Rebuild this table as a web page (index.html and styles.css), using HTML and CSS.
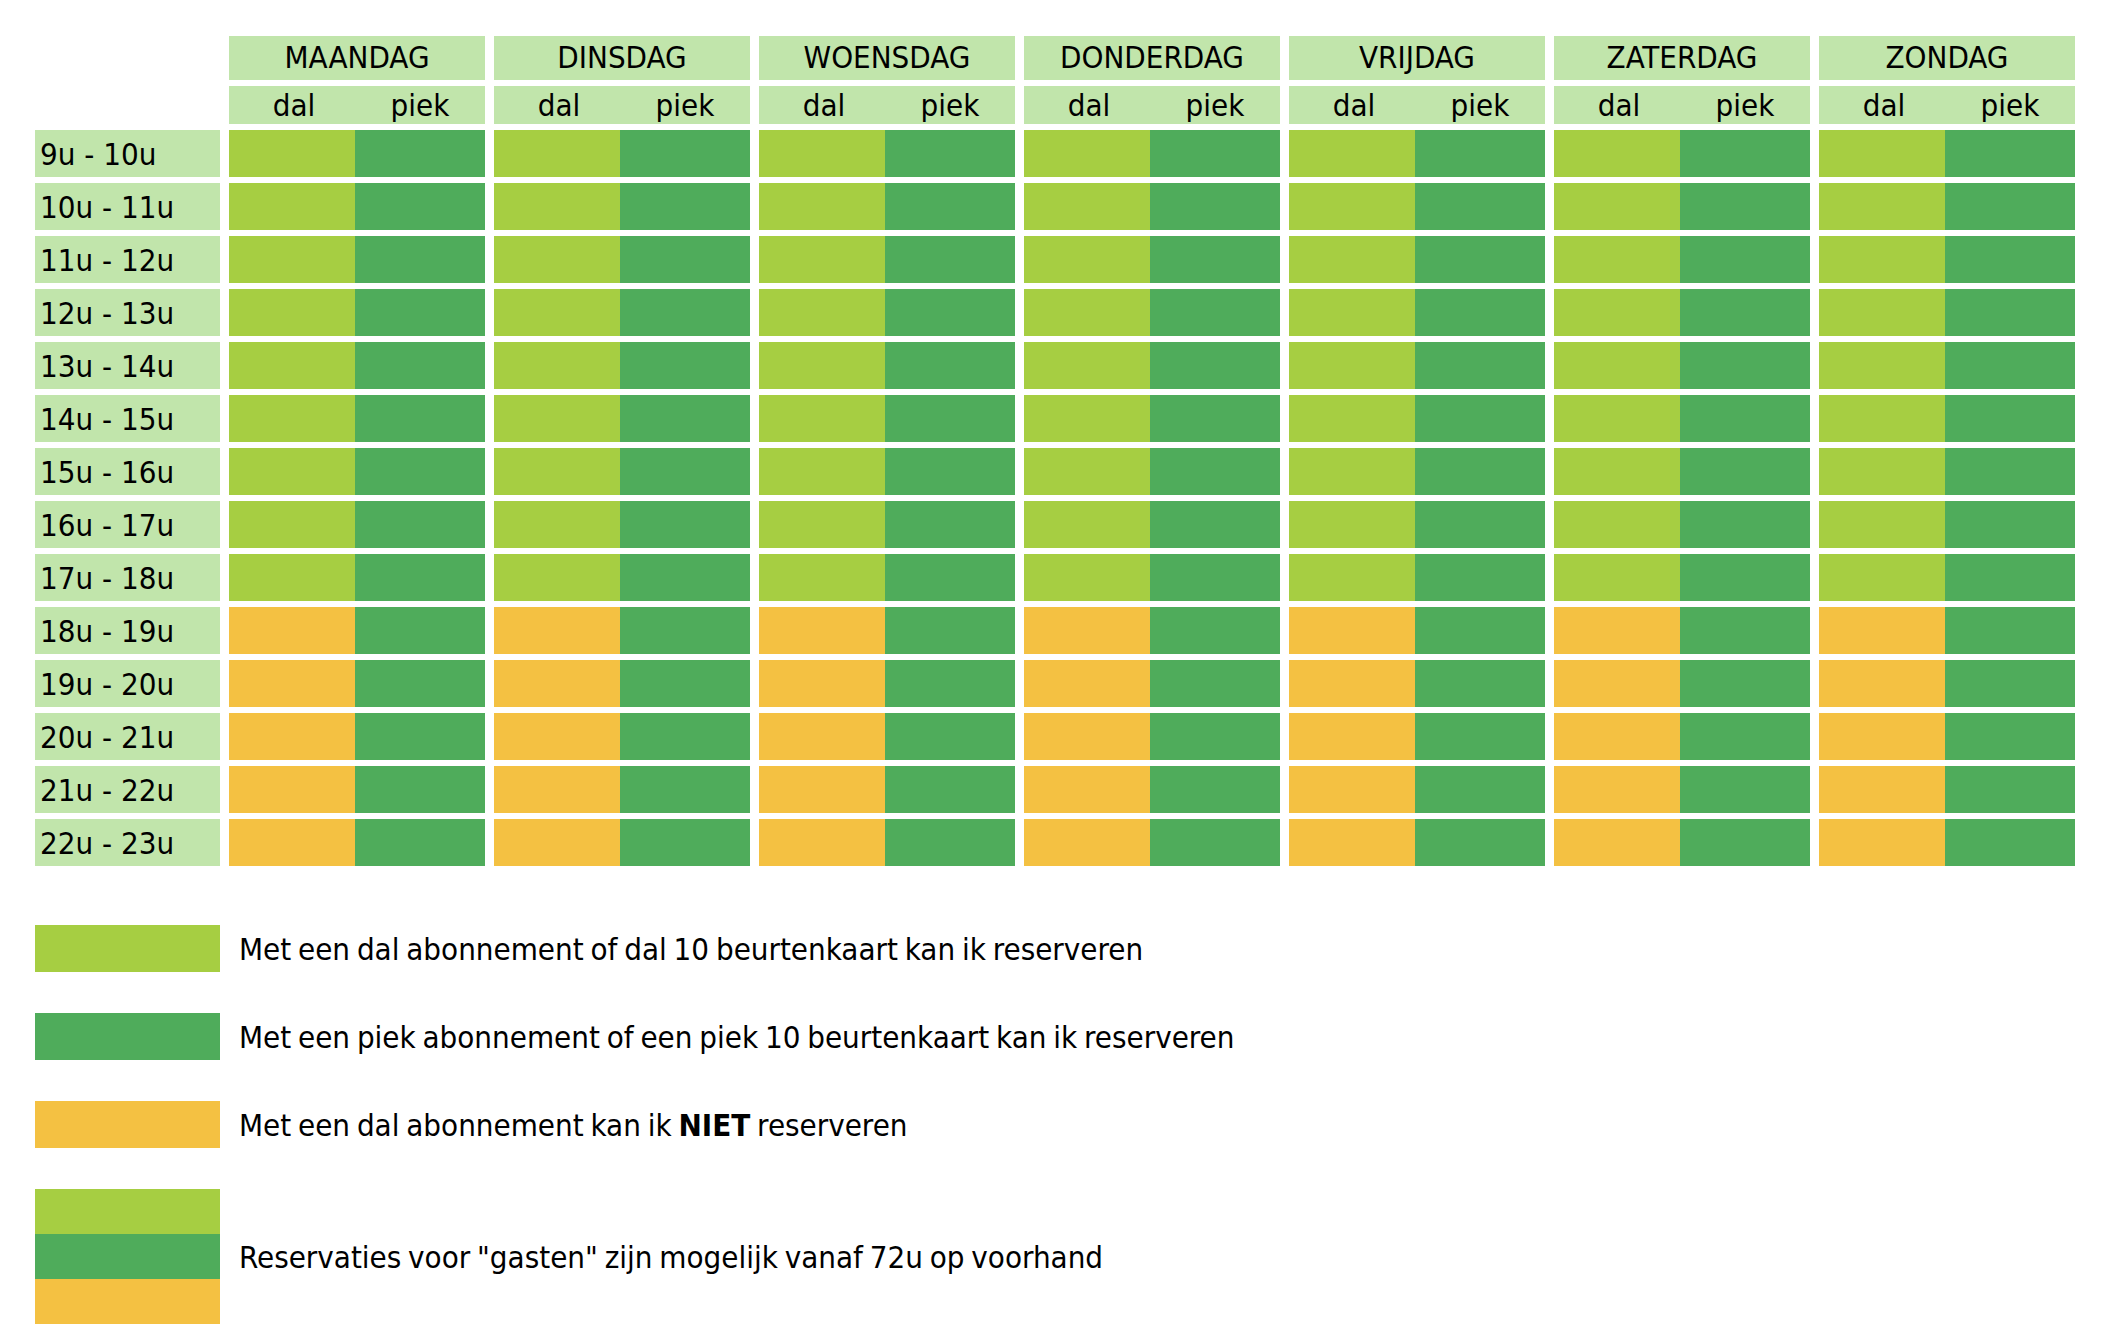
FILE: index.html
```html
<!DOCTYPE html>
<html lang="nl">
<head>
<meta charset="utf-8">
<title>Reservatieschema</title>
<link rel="stylesheet" href="styles.css">
</head>
<body>
<div class="page">
  <div class="schedule">
    <div class="corner"></div>
    <div class="day">MAANDAG</div>
    <div class="day">DINSDAG</div>
    <div class="day">WOENSDAG</div>
    <div class="day">DONDERDAG</div>
    <div class="day">VRIJDAG</div>
    <div class="day">ZATERDAG</div>
    <div class="day">ZONDAG</div>

    <div class="sub"><span class="dal">dal</span><span class="piek">piek</span></div>
    <div class="sub"><span class="dal">dal</span><span class="piek">piek</span></div>
    <div class="sub"><span class="dal">dal</span><span class="piek">piek</span></div>
    <div class="sub"><span class="dal">dal</span><span class="piek">piek</span></div>
    <div class="sub"><span class="dal">dal</span><span class="piek">piek</span></div>
    <div class="sub"><span class="dal">dal</span><span class="piek">piek</span></div>
    <div class="sub"><span class="dal">dal</span><span class="piek">piek</span></div>
  </div>

  <div class="schedule body">
    <div class="time">9u - 10u</div>
    <div class="slot day-light"><div class="dal"></div><div class="piek"></div></div>
    <div class="slot day-light"><div class="dal"></div><div class="piek"></div></div>
    <div class="slot day-light"><div class="dal"></div><div class="piek"></div></div>
    <div class="slot day-light"><div class="dal"></div><div class="piek"></div></div>
    <div class="slot day-light"><div class="dal"></div><div class="piek"></div></div>
    <div class="slot day-light"><div class="dal"></div><div class="piek"></div></div>
    <div class="slot day-light"><div class="dal"></div><div class="piek"></div></div>

    <div class="time">10u - 11u</div>
    <div class="slot day-light"><div class="dal"></div><div class="piek"></div></div>
    <div class="slot day-light"><div class="dal"></div><div class="piek"></div></div>
    <div class="slot day-light"><div class="dal"></div><div class="piek"></div></div>
    <div class="slot day-light"><div class="dal"></div><div class="piek"></div></div>
    <div class="slot day-light"><div class="dal"></div><div class="piek"></div></div>
    <div class="slot day-light"><div class="dal"></div><div class="piek"></div></div>
    <div class="slot day-light"><div class="dal"></div><div class="piek"></div></div>

    <div class="time">11u - 12u</div>
    <div class="slot day-light"><div class="dal"></div><div class="piek"></div></div>
    <div class="slot day-light"><div class="dal"></div><div class="piek"></div></div>
    <div class="slot day-light"><div class="dal"></div><div class="piek"></div></div>
    <div class="slot day-light"><div class="dal"></div><div class="piek"></div></div>
    <div class="slot day-light"><div class="dal"></div><div class="piek"></div></div>
    <div class="slot day-light"><div class="dal"></div><div class="piek"></div></div>
    <div class="slot day-light"><div class="dal"></div><div class="piek"></div></div>

    <div class="time">12u - 13u</div>
    <div class="slot day-light"><div class="dal"></div><div class="piek"></div></div>
    <div class="slot day-light"><div class="dal"></div><div class="piek"></div></div>
    <div class="slot day-light"><div class="dal"></div><div class="piek"></div></div>
    <div class="slot day-light"><div class="dal"></div><div class="piek"></div></div>
    <div class="slot day-light"><div class="dal"></div><div class="piek"></div></div>
    <div class="slot day-light"><div class="dal"></div><div class="piek"></div></div>
    <div class="slot day-light"><div class="dal"></div><div class="piek"></div></div>

    <div class="time">13u - 14u</div>
    <div class="slot day-light"><div class="dal"></div><div class="piek"></div></div>
    <div class="slot day-light"><div class="dal"></div><div class="piek"></div></div>
    <div class="slot day-light"><div class="dal"></div><div class="piek"></div></div>
    <div class="slot day-light"><div class="dal"></div><div class="piek"></div></div>
    <div class="slot day-light"><div class="dal"></div><div class="piek"></div></div>
    <div class="slot day-light"><div class="dal"></div><div class="piek"></div></div>
    <div class="slot day-light"><div class="dal"></div><div class="piek"></div></div>

    <div class="time">14u - 15u</div>
    <div class="slot day-light"><div class="dal"></div><div class="piek"></div></div>
    <div class="slot day-light"><div class="dal"></div><div class="piek"></div></div>
    <div class="slot day-light"><div class="dal"></div><div class="piek"></div></div>
    <div class="slot day-light"><div class="dal"></div><div class="piek"></div></div>
    <div class="slot day-light"><div class="dal"></div><div class="piek"></div></div>
    <div class="slot day-light"><div class="dal"></div><div class="piek"></div></div>
    <div class="slot day-light"><div class="dal"></div><div class="piek"></div></div>

    <div class="time">15u - 16u</div>
    <div class="slot day-light"><div class="dal"></div><div class="piek"></div></div>
    <div class="slot day-light"><div class="dal"></div><div class="piek"></div></div>
    <div class="slot day-light"><div class="dal"></div><div class="piek"></div></div>
    <div class="slot day-light"><div class="dal"></div><div class="piek"></div></div>
    <div class="slot day-light"><div class="dal"></div><div class="piek"></div></div>
    <div class="slot day-light"><div class="dal"></div><div class="piek"></div></div>
    <div class="slot day-light"><div class="dal"></div><div class="piek"></div></div>

    <div class="time">16u - 17u</div>
    <div class="slot day-light"><div class="dal"></div><div class="piek"></div></div>
    <div class="slot day-light"><div class="dal"></div><div class="piek"></div></div>
    <div class="slot day-light"><div class="dal"></div><div class="piek"></div></div>
    <div class="slot day-light"><div class="dal"></div><div class="piek"></div></div>
    <div class="slot day-light"><div class="dal"></div><div class="piek"></div></div>
    <div class="slot day-light"><div class="dal"></div><div class="piek"></div></div>
    <div class="slot day-light"><div class="dal"></div><div class="piek"></div></div>

    <div class="time">17u - 18u</div>
    <div class="slot day-light"><div class="dal"></div><div class="piek"></div></div>
    <div class="slot day-light"><div class="dal"></div><div class="piek"></div></div>
    <div class="slot day-light"><div class="dal"></div><div class="piek"></div></div>
    <div class="slot day-light"><div class="dal"></div><div class="piek"></div></div>
    <div class="slot day-light"><div class="dal"></div><div class="piek"></div></div>
    <div class="slot day-light"><div class="dal"></div><div class="piek"></div></div>
    <div class="slot day-light"><div class="dal"></div><div class="piek"></div></div>

    <div class="time">18u - 19u</div>
    <div class="slot day-evening"><div class="dal"></div><div class="piek"></div></div>
    <div class="slot day-evening"><div class="dal"></div><div class="piek"></div></div>
    <div class="slot day-evening"><div class="dal"></div><div class="piek"></div></div>
    <div class="slot day-evening"><div class="dal"></div><div class="piek"></div></div>
    <div class="slot day-evening"><div class="dal"></div><div class="piek"></div></div>
    <div class="slot day-evening"><div class="dal"></div><div class="piek"></div></div>
    <div class="slot day-evening"><div class="dal"></div><div class="piek"></div></div>

    <div class="time">19u - 20u</div>
    <div class="slot day-evening"><div class="dal"></div><div class="piek"></div></div>
    <div class="slot day-evening"><div class="dal"></div><div class="piek"></div></div>
    <div class="slot day-evening"><div class="dal"></div><div class="piek"></div></div>
    <div class="slot day-evening"><div class="dal"></div><div class="piek"></div></div>
    <div class="slot day-evening"><div class="dal"></div><div class="piek"></div></div>
    <div class="slot day-evening"><div class="dal"></div><div class="piek"></div></div>
    <div class="slot day-evening"><div class="dal"></div><div class="piek"></div></div>

    <div class="time">20u - 21u</div>
    <div class="slot day-evening"><div class="dal"></div><div class="piek"></div></div>
    <div class="slot day-evening"><div class="dal"></div><div class="piek"></div></div>
    <div class="slot day-evening"><div class="dal"></div><div class="piek"></div></div>
    <div class="slot day-evening"><div class="dal"></div><div class="piek"></div></div>
    <div class="slot day-evening"><div class="dal"></div><div class="piek"></div></div>
    <div class="slot day-evening"><div class="dal"></div><div class="piek"></div></div>
    <div class="slot day-evening"><div class="dal"></div><div class="piek"></div></div>

    <div class="time">21u - 22u</div>
    <div class="slot day-evening"><div class="dal"></div><div class="piek"></div></div>
    <div class="slot day-evening"><div class="dal"></div><div class="piek"></div></div>
    <div class="slot day-evening"><div class="dal"></div><div class="piek"></div></div>
    <div class="slot day-evening"><div class="dal"></div><div class="piek"></div></div>
    <div class="slot day-evening"><div class="dal"></div><div class="piek"></div></div>
    <div class="slot day-evening"><div class="dal"></div><div class="piek"></div></div>
    <div class="slot day-evening"><div class="dal"></div><div class="piek"></div></div>

    <div class="time">22u - 23u</div>
    <div class="slot day-evening"><div class="dal"></div><div class="piek"></div></div>
    <div class="slot day-evening"><div class="dal"></div><div class="piek"></div></div>
    <div class="slot day-evening"><div class="dal"></div><div class="piek"></div></div>
    <div class="slot day-evening"><div class="dal"></div><div class="piek"></div></div>
    <div class="slot day-evening"><div class="dal"></div><div class="piek"></div></div>
    <div class="slot day-evening"><div class="dal"></div><div class="piek"></div></div>
    <div class="slot day-evening"><div class="dal"></div><div class="piek"></div></div>
  </div>

  <div class="legend">
    <div class="legend-item"><div class="swatch light"></div><div class="legend-text">Met een dal abonnement of dal 10 beurtenkaart kan ik reserveren</div></div>
    <div class="legend-item"><div class="swatch dark"></div><div class="legend-text">Met een piek abonnement of een piek 10 beurtenkaart kan ik reserveren</div></div>
    <div class="legend-item"><div class="swatch yellow"></div><div class="legend-text">Met een dal abonnement kan ik <b>NIET</b> reserveren</div></div>
    <div class="legend-item"><div class="swatch stack"><div class="light"></div><div class="dark"></div><div class="yellow"></div></div><div class="legend-text">Reservaties voor "gasten" zijn mogelijk vanaf 72u op voorhand</div></div>
  </div>
</div>
</body>
</html>
```
FILE: styles.css
```css
html, body {
  margin: 0;
  padding: 0;
  background: #ffffff;
}
body {
  font-family: "DejaVu Sans Condensed", "Liberation Sans Narrow", "Liberation Sans", sans-serif;
  color: #000;
}
.page {
  padding: 36px 0 0 35px;
}
.schedule {
  display: grid;
  grid-template-columns: 185px repeat(7, 256px);
  grid-template-rows: 44px 38px;
  column-gap: 9px;
  row-gap: 6px;
}
.schedule.body {
  margin-top: 6px;
  grid-template-rows: repeat(14, 47px);
}
.corner {
  grid-row: span 2;
}
.day {
  background: #c1e5ab;
  display: flex;
  align-items: center;
  justify-content: center;
  font-size: 31px;
  padding-bottom: 3px;
  box-sizing: border-box;
}
.sub {
  background: #c1e5ab;
  display: flex;
  align-items: center;
  font-size: 31px;
}
.sub .dal, .slot .dal {
  width: 126px;
  text-align: center;
}
.sub .piek, .slot .piek {
  flex: 1;
  text-align: center;
}
.sub .dal {
  padding-left: 4px;
  box-sizing: border-box;
}
.time {
  background: #c1e5ab;
  display: flex;
  align-items: center;
  padding-left: 5px;
  font-size: 31px;
}
.slot {
  display: flex;
}
.slot .piek { background: #4fac5b; }
.day-light .dal { background: #a6ce42; }
.day-evening .dal { background: #f4c142; }

.light { background: #a6ce42; }
.dark { background: #4fac5b; }
.yellow { background: #f4c142; }

.legend {
  margin-top: 59px;
  display: flex;
  flex-direction: column;
  gap: 41px;
}
.legend-item {
  display: flex;
  align-items: center;
  gap: 19px;
}
.swatch {
  width: 185px;
  height: 47px;
  flex: none;
}
.swatch.stack {
  height: 135px;
  display: flex;
  flex-direction: column;
}
.swatch.stack > div {
  flex: 1;
}
.legend-text {
  font-size: 31px;
  word-spacing: -2px;
}
.legend-text b {
  font-weight: bold;
}
```
